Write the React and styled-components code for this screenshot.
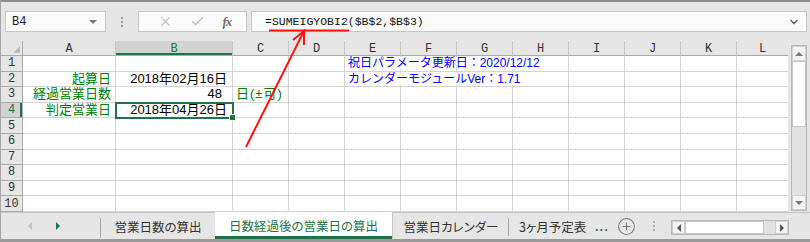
import React from 'react'
import styled, { createGlobalStyle, css } from 'styled-components'
import { X, Check, ChevronDown, CirclePlus } from 'lucide-react'

const GREEN = '#217346'
const JP = `"Noto Sans CJK JP", "Noto Sans", sans-serif`
const CELL = `"Liberation Sans", "Noto Sans CJK JP", sans-serif`
const MONO = `"Liberation Mono", "DejaVu Sans Mono", monospace`

const GlobalStyle = createGlobalStyle`
  html, body { margin: 0; padding: 0; background: #e6e6e6; }
  * { box-sizing: border-box; }
`

const Window = styled.div`
  position: relative;
  width: 810px;
  height: 242px;
  display: flex;
  flex-direction: column;
  background: #e6e6e6;
  border-top: 2px solid #8c8c8c;
  border-bottom: 3px solid #9a9a9a;
  border-left: 1px solid #a6a6a6;
  overflow: hidden;
`

const FormulaBar = styled.div`
  height: 39px;
  display: flex;
  align-items: center;
  padding: 0 3px 0 4px;
`

const Box = styled.div`
  height: 21px;
  background: #fbfbfb;
  border: 1px solid #c6c6c6;
  display: flex;
  align-items: center;
`

const NameBox = styled(Box)`
  width: 101px;
  padding: 0 6px;
  justify-content: space-between;
  font-family: ${MONO};
  font-size: 12px;
  color: #222;
`

const Caret = styled.span`
  width: 0;
  height: 0;
  border-left: 4px solid transparent;
  border-right: 4px solid transparent;
  border-top: 4px solid #777;
  margin-right: 2px;
`

const Grip = styled.div`
  width: ${(p) => p.$w || 32}px;
  display: flex;
  flex-direction: column;
  align-items: center;
  justify-content: center;
  gap: 2px;
  & span {
    width: 2px;
    height: 2px;
    background: ${(p) => p.$color || '#a0a0a0'};
  }
`

const FxBox = styled(Box)`
  width: 109px;
  justify-content: space-around;
  padding: 0 6px 0 10px;
  color: #c4c4c4;
`

const Fx = styled.span`
  font-family: "Liberation Serif", serif;
  font-style: italic;
  font-weight: bold;
  font-size: 13px;
  color: #6f6f6f;
  letter-spacing: -1px;
`

const FormulaInput = styled(Box)`
  flex: 1;
  margin-left: 4px;
  padding: 0 6px 0 13px;
  justify-content: space-between;
  font-family: ${MONO};
  font-size: 11.5px;
  color: #111;
`

const Sheet = styled.div`
  height: 171px;
  display: flex;
`

const Grid = styled.div`
  width: 788px;
  display: grid;
  grid-template-columns: 22px 93px 117px repeat(9, 56px) 52px;
  grid-template-rows: 15px repeat(10, 15.6px);
  background: #fff;
  overflow: hidden;
`

const Corner = styled.div`
  background: #e6e6e6;
  border-right: 1px solid #ababab;
  border-bottom: 1px solid #ababab;
  position: relative;
  &::after {
    content: '';
    position: absolute;
    right: 2px;
    bottom: 2px;
    border-left: 7px solid transparent;
    border-bottom: 7px solid #b9b9b9;
  }
`

const ColHeader = styled.div`
  background: ${(p) => (p.$sel ? '#d2d2d2' : '#e6e6e6')};
  border-right: 1px solid #c6c6c6;
  border-bottom: 1px solid #ababab;
  display: flex;
  align-items: center;
  justify-content: center;
  padding-top: 1px;
  font-family: ${MONO};
  font-size: 12px;
  line-height: 12px;
  color: ${(p) => (p.$sel ? GREEN : '#333')};
  ${(p) => p.$sel && css`box-shadow: inset 0 -2px 0 ${GREEN};`}
`

const RowHeader = styled.div`
  background: ${(p) => (p.$sel ? '#d2d2d2' : '#e6e6e6')};
  border-right: 1px solid #ababab;
  border-bottom: 1px solid #ababab;
  display: flex;
  align-items: center;
  justify-content: center;
  font-family: ${MONO};
  font-size: 12px;
  line-height: 12px;
  color: ${(p) => (p.$sel ? GREEN : '#333')};
  ${(p) => p.$sel && css`box-shadow: inset -2px 0 0 ${GREEN};`}
`

const Cell = styled.div`
  position: relative;
  border-right: 1px solid #d4d4d4;
  border-bottom: 1px solid #d4d4d4;
  display: flex;
  align-items: center;
  justify-content: ${(p) => (p.$right ? 'flex-end' : 'flex-start')};
  padding: ${(p) => (p.$right ? `0 ${p.$pad || 5}px 0 0` : '0 0 0 3px')};
  white-space: nowrap;
  font-family: ${CELL};
  font-size: ${(p) => p.$size || 13}px;
  letter-spacing: ${(p) => p.$track || 0}px;
  line-height: 12px;
  color: ${(p) => p.$color || '#000'};
  ${(p) =>
    p.$sel &&
    css`
      z-index: 2;
      outline: 2px solid ${GREEN};
      outline-offset: -1px;
      &::after {
        content: '';
        position: absolute;
        right: -4px;
        bottom: -4px;
        width: 5px;
        height: 5px;
        background: ${GREEN};
        border: 1px solid #fff;
      }
    `}
`

const Spill = styled.span`
  position: relative;
  z-index: 1;
  background: #fff;
  padding-right: 2px;
`

const VScroll = styled.div`
  width: 22px;
  padding: 4px 3px 1px 3px;
  display: flex;
`

const ScrollTrack = styled.div`
  flex: 1;
  display: flex;
  flex-direction: ${(p) => (p.$horizontal ? 'row' : 'column')};
  border: 1px solid #b8b8b8;
  background-color: #e2e2e2;
  background-image: radial-gradient(#cfcfcf 0.6px, transparent 0.7px);
  background-size: 2px 2px;
`

const ScrollButton = styled.div`
  ${(p) => (p.$horizontal ? 'width: 13px;' : 'height: 15px;')}
  flex: none;
  background: #f4f4f4;
  display: flex;
  align-items: center;
  justify-content: center;
  border: 1px solid #d0d0d0;
`

const Arrow = styled.span`
  width: 0;
  height: 0;
  ${(p) =>
    p.$dir === 'up'
      ? css`border-left: 4px solid transparent; border-right: 4px solid transparent; border-bottom: 4px solid #777;`
      : p.$dir === 'down'
      ? css`border-left: 4px solid transparent; border-right: 4px solid transparent; border-top: 4px solid #777;`
      : p.$dir === 'left'
      ? css`border-top: 4px solid transparent; border-bottom: 4px solid transparent; border-right: 4px solid ${p.$color || '#555'};`
      : css`border-top: 4px solid transparent; border-bottom: 4px solid transparent; border-left: 4px solid ${p.$color || '#555'};`}
`

const Thumb = styled.div`
  ${(p) => (p.$horizontal ? `width: ${p.$size}px;` : `height: ${p.$size}px;`)}
  flex: none;
  background: #fff;
  border: 1px solid #c6c6c6;
`

const Filler = styled.div`
  flex: 1;
`

const TabBar = styled.div`
  height: 27px;
  display: flex;
  align-items: stretch;
  border-top: 1px solid #c6c6c6;
  font-family: ${JP};
  font-feature-settings: "palt";
  font-size: 12.5px;
`

const TabNav = styled.div`
  width: 100px;
  display: flex;
  align-items: center;
  padding-left: 27px;
  gap: 24px;
  position: relative;
  &::after {
    content: '';
    position: absolute;
    right: 0;
    top: 5px;
    bottom: 1px;
    width: 1px;
    background: #a6a6a6;
  }
`

const Tab = styled.div`
  width: ${(p) => p.$w}px;
  flex: none;
  display: flex;
  align-items: center;
  justify-content: ${(p) => (p.$clip ? 'flex-start' : 'center')};
  padding-left: ${(p) => (p.$clip ? 10 : 0)}px;
  overflow: hidden;
  white-space: nowrap;
  color: #333;
  position: relative;
  ${(p) =>
    p.$sep &&
    css`
      &::after {
        content: '';
        position: absolute;
        right: 0;
        top: 5px;
        bottom: 3px;
        width: 1px;
        background: #a6a6a6;
      }
    `}
  ${(p) =>
    p.$active &&
    css`
      margin-top: -1px;
      background: #fff;
      color: ${GREEN};
      border-right: 1px solid #c6c6c6;
      box-shadow: inset 0 -3px 0 ${GREEN};
    `}
`

const More = styled.span`
  width: 24px;
  color: ${GREEN};
  font-weight: bold;
  font-size: 11px;
  display: flex;
  align-items: center;
  padding-left: 6px;
  letter-spacing: 1px;
`

const AddSheet = styled.div`
  width: 26px;
  display: flex;
  align-items: center;
  justify-content: center;
  color: #7a7a7a;
`

const HScrollWrap = styled.div`
  width: 118px;
  margin-left: 2px;
  padding: 7px 0 4px;
  display: flex;
`

const Overlay = styled.svg`
  position: absolute;
  left: -1px;
  top: -2px;
  pointer-events: none;
  z-index: 5;
`

const headers = ['A', 'B', 'C', 'D', 'E', 'F', 'G', 'H', 'I', 'J', 'K', 'L']

const cells = {
  'E1': { text: '祝日パラメータ更新日：2020/12/12', color: '#0000ff', size: 12, spill: true },
  'A2': { text: '起算日', color: '#008000', right: true, pad: 4 },
  'B2': { text: '2018年02月16日', right: true },
  'E2': { text: 'カレンダーモジュールVer：1.71', color: '#0000ff', size: 12, spill: true },
  'A3': { text: '経過営業日数', color: '#008000', right: true, pad: 4 },
  'B3': { text: '48', right: true, pad: 10 },
  'C3': { text: '日(±可)', color: '#008000', size: 13, track: 1, spill: true },
  'A4': { text: '判定営業日', color: '#008000', right: true, pad: 4 },
  'B4': { text: '2018年04月26日', right: true, sel: true },
}

function SheetGrid() {
  const out = [<Corner key="corner" />]
  headers.forEach((h) => out.push(<ColHeader key={h} $sel={h === 'B'}>{h}</ColHeader>))
  for (let r = 1; r <= 10; r++) {
    out.push(<RowHeader key={'r' + r} $sel={r === 4}>{r}</RowHeader>)
    headers.forEach((h) => {
      const c = cells[h + r]
      out.push(
        <Cell
          key={h + r}
          $right={c?.right}
          $pad={c?.pad}
          $color={c?.color}
          $size={c?.size}
          $track={c?.track}
          $sel={c?.sel}
        >
          {c && (c.spill ? <Spill>{c.text}</Spill> : c.text)}
        </Cell>
      )
    })
  }
  return <Grid>{out}</Grid>
}

export default function App() {
  return (
    <>
      <GlobalStyle />
      <Window>
        <FormulaBar>
          <NameBox>
            B4
            <Caret />
          </NameBox>
          <Grip><span /><span /><span /></Grip>
          <FxBox>
            <X size={15} strokeWidth={2} />
            <Check size={15} strokeWidth={2.5} />
            <Fx>fx</Fx>
          </FxBox>
          <FormulaInput>
            =SUMEIGYOBI2($B$2,$B$3)
            <ChevronDown size={12} strokeWidth={3.5} color="#666" />
          </FormulaInput>
        </FormulaBar>

        <Sheet>
          <SheetGrid />
          <VScroll>
            <ScrollTrack>
              <ScrollButton><Arrow $dir="up" /></ScrollButton>
              <Thumb $size={66} />
              <Filler />
              <ScrollButton><Arrow $dir="down" /></ScrollButton>
            </ScrollTrack>
          </VScroll>
        </Sheet>

        <TabBar>
          <TabNav>
            <Arrow $dir="left" $color="#c4c4c4" />
            <Arrow $dir="right" $color={GREEN} />
          </TabNav>
          <Tab $w={114}>営業日数の算出</Tab>
          <Tab $w={178} $active>日数経過後の営業日の算出</Tab>
          <Tab $w={116} $sep>営業日カレンダー</Tab>
          <Tab $w={80} $clip>3ヶ月予定表</Tab>
          <More>...</More>
          <AddSheet><CirclePlus size={19} strokeWidth={1.3} /></AddSheet>
          <Grip $w={30} $color="#b0b0b0"><span /><span /><span /></Grip>
          <HScrollWrap>
            <ScrollTrack $horizontal>
              <ScrollButton $horizontal><Arrow $dir="left" /></ScrollButton>
              <Thumb $horizontal $size={79} />
              <Filler />
              <ScrollButton $horizontal><Arrow $dir="right" /></ScrollButton>
            </ScrollTrack>
          </HScrollWrap>
        </TabBar>

        <Overlay width="810" height="242" viewBox="0 0 810 242">
          <line x1="269" y1="30.5" x2="349" y2="30.5" stroke="#ff1010" strokeWidth="2" />
          <line x1="246" y1="147" x2="304" y2="31" stroke="#ff1010" strokeWidth="2" />
          <polyline points="293,40 304,31 304,45" fill="none" stroke="#ff1010" strokeWidth="2" />
        </Overlay>
      </Window>
    </>
  )
}
